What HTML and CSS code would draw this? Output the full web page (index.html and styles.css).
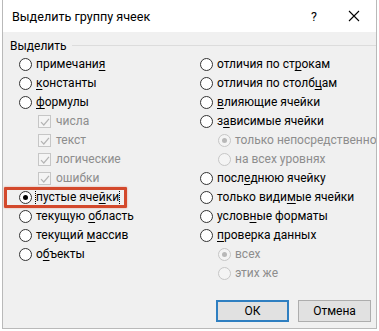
FILE: index.html
```html
<!DOCTYPE html>
<html lang="ru">
<head>
<meta charset="utf-8">
<link rel="stylesheet" href="styles.css">
</head>
<body>
<div class="dialog">
  <div class="titlebar">
    <span class="title">Выделить группу ячеек</span>
    <span class="help">?</span>
    <span class="close"><svg width="12" height="12" viewBox="0 0 12 12"><path d="M1 1L11 11M11 1L1 11" stroke="#000" stroke-width="1.1" fill="none"/></svg></span>
  </div>
  <div class="body">
    <div class="group-head"><span class="group-label">Выделить</span><span class="group-line"></span></div>
    <div class="cols">
      <div class="col">
        <div class="row"><span class="radio"></span><span class="lbl">примечани<u>я</u></span></div>
        <div class="row"><span class="radio"></span><span class="lbl"><u>к</u>онстанты</span></div>
        <div class="row"><span class="radio"></span><span class="lbl"><u>ф</u>ормулы</span></div>
        <div class="row sub"><span class="check"><svg width="10" height="10" viewBox="0 0 10 10"><path d="M1 5.2L3.8 8L9 1.8" stroke="#b4b4b4" stroke-width="1.2" fill="none"/></svg></span><span class="lbl dis">числа</span></div>
        <div class="row sub"><span class="check"><svg width="10" height="10" viewBox="0 0 10 10"><path d="M1 5.2L3.8 8L9 1.8" stroke="#b4b4b4" stroke-width="1.2" fill="none"/></svg></span><span class="lbl dis">текст</span></div>
        <div class="row sub"><span class="check"><svg width="10" height="10" viewBox="0 0 10 10"><path d="M1 5.2L3.8 8L9 1.8" stroke="#b4b4b4" stroke-width="1.2" fill="none"/></svg></span><span class="lbl dis">логические</span></div>
        <div class="row sub"><span class="check"><svg width="10" height="10" viewBox="0 0 10 10"><path d="M1 5.2L3.8 8L9 1.8" stroke="#b4b4b4" stroke-width="1.2" fill="none"/></svg></span><span class="lbl dis">ошибки</span></div>
        <div class="row"><span class="radio on"></span><span class="lbl focus">пустые яче<u>й</u>ки</span></div>
        <div class="row"><span class="radio"></span><span class="lbl">текущую <u>о</u>бласть</span></div>
        <div class="row"><span class="radio"></span><span class="lbl">текущий <u>м</u>ассив</span></div>
        <div class="row"><span class="radio"></span><span class="lbl">о<u>б</u>ъекты</span></div>
      </div>
      <div class="col">
        <div class="row"><span class="radio"></span><span class="lbl">отличия по ст<u>р</u>окам</span></div>
        <div class="row"><span class="radio"></span><span class="lbl">отличия по столб<u>ц</u>ам</span></div>
        <div class="row"><span class="radio"></span><span class="lbl"><u>в</u>лияющие ячейки</span></div>
        <div class="row"><span class="radio"></span><span class="lbl">з<u>а</u>висимые ячейки</span></div>
        <div class="row sub2"><span class="radio dis on"></span><span class="lbl dis">только непосредственно</span></div>
        <div class="row sub2"><span class="radio dis"></span><span class="lbl dis">на всех уровнях</span></div>
        <div class="row"><span class="radio"></span><span class="lbl">посл<u>е</u>днюю ячейку</span></div>
        <div class="row"><span class="radio"></span><span class="lbl">только види<u>м</u>ые ячейки</span></div>
        <div class="row"><span class="radio"></span><span class="lbl">услов<u>н</u>ые форматы</span></div>
        <div class="row"><span class="radio"></span><span class="lbl"><u>п</u>роверка данных</span></div>
        <div class="row sub2"><span class="radio dis on"></span><span class="lbl dis">всех</span></div>
        <div class="row sub2"><span class="radio dis"></span><span class="lbl dis">этих же</span></div>
      </div>
    </div>
    <div class="buttons">
      <button class="btn default">ОК</button>
      <button class="btn">Отмена</button>
    </div>
  </div>
  <div class="highlight"></div>
</div>
</body>
</html>
```

FILE: styles.css
```css
html, body {
  margin: 0;
  padding: 0;
  background: #fff;
}
body {
  font-family: Roboto, "Noto Sans", sans-serif;
  font-size: 12px;
  color: #000;
}
.dialog {
  position: relative;
  margin-left: 2px;
  width: 373px;
  height: 328px;
  border: 1px solid #b9b9b9;
  border-top: none;
  background: #f0f0f0;
  overflow: hidden;
}
.titlebar {
  height: 32px;
  background: #fff;
  display: flex;
  align-items: center;
  padding-left: 9px;
}
.title {
  font-size: 12.6px;
  flex: 1;
}
.help {
  width: 20px;
  text-align: center;
  margin-right: 24px;
  font-size: 12.5px;
}
.close {
  width: 12px;
  margin-right: 16px;
  display: flex;
}
.body {
  padding: 7px 0 0 7px;
}
.group-head {
  display: flex;
  align-items: center;
  height: 14px;
}
.group-label {
  padding-right: 5px;
}
.group-line {
  flex: 0 0 306px;
  border-top: 1px solid #dcdcdc;
  margin-top: -1px;
}
.cols {
  display: grid;
  grid-template-columns: 181px 180px;
  margin-top: 2px;
}
.col {
  padding-left: 9px;
}
.row {
  height: 19px;
  display: flex;
  align-items: center;
  white-space: nowrap;
}
.radio {
  width: 11px;
  height: 11px;
  border: 1px solid #333;
  border-radius: 50%;
  background: #fff;
  margin-right: 4px;
  position: relative;
  flex: none;
}
.radio.on::after {
  content: "";
  position: absolute;
  left: 3px;
  top: 3px;
  width: 5px;
  height: 5px;
  border-radius: 50%;
  background: #000;
}
.radio.dis {
  border-color: #c6c6c6;
  background: #f4f4f4;
}
.radio.dis.on::after {
  background: #b8b8b8;
}
.sub {
  padding-left: 19px;
}
.sub2 {
  padding-left: 18px;
}
.check {
  width: 11px;
  height: 11px;
  border: 1px solid #c6c6c6;
  background: #f4f4f4;
  margin-right: 5px;
  display: flex;
  align-items: center;
  justify-content: center;
  flex: none;
}
.lbl {
  line-height: 15px;
}
.lbl u {
  text-decoration-thickness: 1px;
  text-underline-offset: 2px;
}
.dis {
  color: #8d8d8d;
}
.focus {
  outline: 1px dotted #000;
  outline-offset: 0;
}
.buttons {
  display: flex;
  justify-content: flex-end;
  gap: 9px;
  padding-right: 5px;
  margin-top: 17px;
}
.btn {
  width: 73px;
  height: 22px;
  background: #e1e1e1;
  border: 1px solid #adadad;
  font-family: inherit;
  font-size: 12px;
  color: #000;
  padding: 0;
}
.btn.default {
  border: 2px solid #2f7fc1;
}
.highlight {
  position: absolute;
  left: 1px;
  top: 187px;
  width: 117px;
  height: 15px;
  border: 3px solid #d3492c;
  border-radius: 1px;
  box-shadow: 0 0 2px rgba(211, 73, 44, 0.5);
}
```
